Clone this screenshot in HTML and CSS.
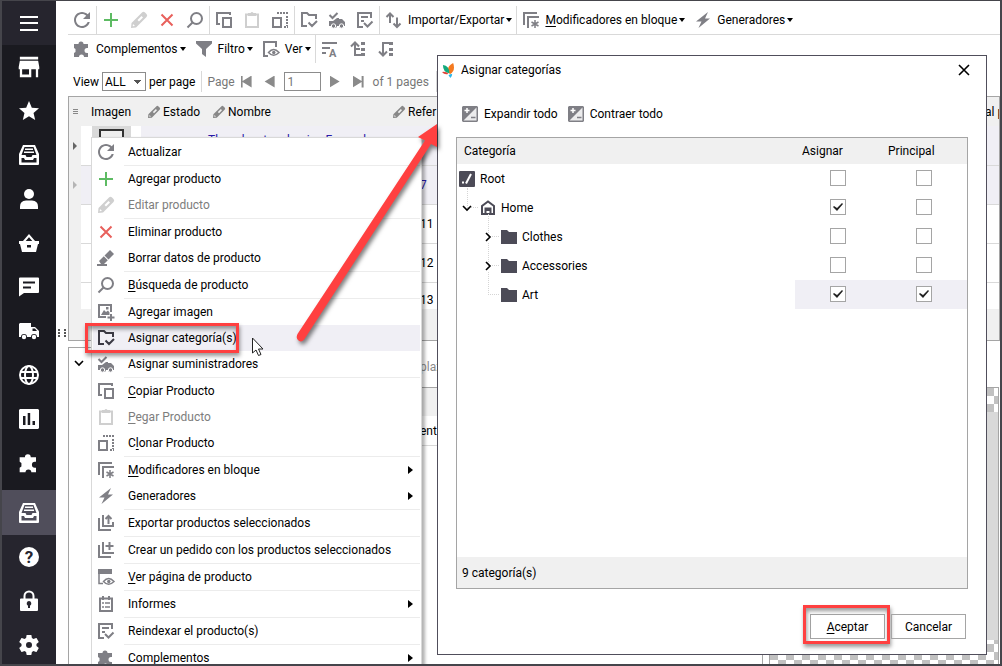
FILE: index.html
```html
<!DOCTYPE html>
<html lang="es">
<head>
<meta charset="utf-8">
<title>Asignar categorías</title>
<link rel="stylesheet" href="styles.css">
</head>
<body>
<svg class="defs" aria-hidden="true">
  <symbol id="i-refresh" viewBox="0 0 24 24"><path fill="currentColor" d="M17.65 6.35C16.2 4.9 14.21 4 12 4c-4.42 0-7.99 3.58-7.99 8s3.57 8 7.99 8c3.73 0 6.84-2.55 7.73-6h-2.08c-.82 2.33-3.04 4-5.65 4-3.31 0-6-2.69-6-6s2.69-6 6-6c1.66 0 3.14.69 4.22 1.78L13 11h7V4l-2.35 2.35z"/></symbol>
  <symbol id="i-plus" viewBox="0 0 24 24"><path class="s2" d="M12 5v14M5 12h14"/></symbol>
  <symbol id="i-x" viewBox="0 0 24 24"><path class="s2" d="M6.500 6.500l11 11M17.500 6.500l-11 11"/></symbol>
  <symbol id="i-pencil" viewBox="0 0 24 24"><path fill="currentColor" fill-rule="evenodd" d="M4 20l.5-5L15 4.500q1.500-1.500 3 0l1.500 1.500q1.500 1.500 0 3L9 19.500zM14.500 8l-4 4 1.500 1.500 4-4zM6 16l-.3 2.300L8 18z"/></symbol>
  <symbol id="i-search" viewBox="0 0 24 24"><circle class="s2" cx="13.500" cy="10.500" r="5.500"/><path class="s2" d="M9.500 14.500l-5 5"/></symbol>
  <symbol id="i-copy" viewBox="0 0 24 24"><path class="s2" d="M18 7V5H5v11h3"/><path class="s2" d="M11 10h8v9h-8z"/></symbol>
  <symbol id="i-paste" viewBox="0 0 24 24"><path class="s2" d="M6 6.500h12V19H6z"/><path fill="currentColor" d="M8 8V5h2.500q1.500-2 3 0H16v3z"/></symbol>
  <symbol id="i-clone" viewBox="0 0 24 24"><path class="s2" d="M5 10h8v9H5z"/><path class="s2 dash" d="M9 5h11M19 8v10M16 19h4"/></symbol>
  <symbol id="i-foldercheck" viewBox="0 0 24 24"><path class="s2" d="M10 18H5V5h5l2 2h7v4M11.500 14.500l3.500 3.500 5-5"/></symbol>
  <symbol id="i-truckcheck" viewBox="0 0 24 24"><path class="s2" d="M4.500 7l3 3 5-5"/><path fill="currentColor" d="M4 13h4l4-3h2v1h3l3 3v4h-2a2 2 0 0 1-4 0h-2a2 2 0 0 1-4 0H4z"/><circle cx="8.500" cy="18" r="2.200" fill="currentColor" stroke="#fff"/><circle cx="16.500" cy="18" r="2.200" fill="currentColor" stroke="#fff"/></symbol>
  <symbol id="i-doccheck" viewBox="0 0 24 24"><path class="s2" d="M10 19H5V5h13v5M8 9h7M8 13h3M11 15l3.500 3.500 5-5"/></symbol>
  <symbol id="i-updown" viewBox="0 0 24 24"><path class="s2" d="M8 15V5.500M4.500 9L8 5.500 11.500 9M15 9.500V19M11.500 15.500L15 19l3.500-3.500"/></symbol>
  <symbol id="i-bulk" viewBox="0 0 24 24"><path class="s2" d="M5 17V5h13M9 20V9h11"/><path class="s1" d="M16 12v8M12.500 14l7 4M19.500 14l-7 4"/></symbol>
  <symbol id="i-bolt" viewBox="0 0 24 24"><path fill="currentColor" d="M17 4L5 13.500h5.500L7.500 20 19 10.500h-5z"/></symbol>
  <symbol id="i-puzzle" viewBox="0 0 24 24"><path fill="currentColor" d="M4 7h4.500a2.500 2.500 0 1 1 5 0H18v4h-1a2 2 0 1 0 0 5h1v4h-4a2.500 2.500 0 1 0-5 0H4v-4l1.500-1v-3L4 11z"/></symbol>
  <symbol id="i-funnel" viewBox="0 0 24 24"><path fill="currentColor" d="M4 4h16v2.500L14 12v8l-4-3v-5L4 6.500z"/></symbol>
  <symbol id="i-view" viewBox="0 0 24 24"><path class="s2" d="M9 19H5V5h12v5"/><path class="s1" d="M9.500 15.500q5-6 10.500 0q-5.500 5.500-10.500 0z"/><circle cx="14.800" cy="15.500" r="1.700" fill="currentColor"/></symbol>
  <symbol id="i-page" viewBox="0 0 24 24"><path fill="currentColor" d="M4 4h14v5H4z"/><path class="s1" d="M9 18.500H5V8M9.500 16.500q5-6 10.500 0q-5.500 5.500-10.500 0z"/><circle cx="14.800" cy="16.500" r="1.700" fill="currentColor"/></symbol>
  <symbol id="i-treeup" viewBox="0 0 24 24"><path class="s2" d="M9 6v12h6M5 9.500L9 5.500l4 4M9 12h5"/><path fill="currentColor" d="M15 5h4v3h-4zM15 11h4v3h-4zM15 16h4v3h-4z"/></symbol>
  <symbol id="i-treedown" viewBox="0 0 24 24"><path class="s2" d="M15 6H9v12M5 14.500l4 4 4-4"/><path fill="currentColor" d="M15 5h4v3h-4zM15 11h4v3h-4zM15 16h4v3h-4z"/></symbol>
  <symbol id="i-eraser" viewBox="0 0 24 24"><path fill="currentColor" d="M16 4l4 4-5.500 5.500-4-4zM9.800 10.300l4 4L10 18H7l-2-3zM3 18h10v2H3z"/></symbol>
  <symbol id="i-image" viewBox="0 0 24 24"><path class="s2" d="M12 17H5V5h12v7M17 14v7M13.500 17.500h7"/><path fill="currentColor" d="M7 15l3-5 2 2 2-1.500 1.500 2v2.500zM12 7h2.500v2.500H12z"/></symbol>
  <symbol id="i-export" viewBox="0 0 24 24"><path class="s2" d="M5 7v12h12M9 4v11h10v-4M14.500 13V5M11.500 8l3-3 3 3"/></symbol>
  <symbol id="i-order" viewBox="0 0 24 24"><path class="s2" d="M5 7v12h12M9 4v11h11M15.500 4v8M11.500 8h8"/></symbol>
  <symbol id="i-report" viewBox="0 0 24 24"><path class="s2" d="M6 6.500h12V19H6zM9 4v4M15 4v4"/><path class="s1" d="M8 11h2M11 11h5M8 15h2M11 15h5"/></symbol>
  <symbol id="i-pm" viewBox="0 0 16 16"><path fill="currentColor" d="M1 0h14l1 1v14l-1 1H1l-1-1V1z"/><path d="M1.500 14.500L14.500 1.500V14.500z" fill="#fff" opacity=".85"/><path stroke="#fff" stroke-width="1.500" d="M2.500 4.500h5M5 2v5"/><path stroke="currentColor" stroke-width="1.500" d="M9 11.500h4.500"/></symbol>
  <symbol id="i-root" viewBox="0 0 16 16"><rect width="16" height="16" rx="1" fill="currentColor"/><path stroke="#fff" stroke-width="2" d="M12 3L7 12.500"/><path fill="#fff" d="M3 10.500h2v2H3z"/></symbol>
  <symbol id="i-home" viewBox="0 0 16 16"><path fill="none" stroke="currentColor" stroke-width="2" d="M2 14V6l6-4.500L14 6v8z"/><path fill="currentColor" d="M4.500 7.500h7V15h-2v-4h-3v4h-2z"/></symbol>
  <symbol id="i-folder" viewBox="0 0 16 16"><path fill="currentColor" d="M0 1h6l2 2h8v12H0z"/></symbol>
  <symbol id="i-down" viewBox="0 0 10 10"><path fill="none" stroke="#000" stroke-width="1.600" d="M1 3l4 4 4-4"/></symbol>
  <symbol id="i-right" viewBox="0 0 10 10"><path fill="none" stroke="#000" stroke-width="1.600" d="M3 1l4 4-4 4"/></symbol>

  <symbol id="n-menu" viewBox="0 0 24 24"><path class="s2" d="M3 6h18M3 12h18M3 19h18"/></symbol>
  <symbol id="n-store" viewBox="1.500 1.500 21 21"><path fill="currentColor" d="M20 3H4v2.500h16zM21 14v-2l-1-5.500H4L3 12v2h1v7h10v-7h4v7h2v-7zM12 18.500H6V14h6z"/></symbol>
  <symbol id="n-star" viewBox="0 0 24 24"><path fill="currentColor" d="M12 17.270L18.180 21l-1.640-7.030L22 9.240l-7.190-.61L12 2 9.190 8.630 2 9.240l5.460 4.730L5.820 21z"/></symbol>
  <symbol id="n-drawer" viewBox="0 0 24 24"><path fill="currentColor" fill-rule="evenodd" d="M6 2h12l4 9v10q0 1-1 1H3q-1 0-1-1V11zM7.500 4L4.500 12h4l1 2h5l1-2h4L16.500 4zM4.500 15v4.500h15V15H17l-1 2H8l-1-2z"/><path fill="currentColor" d="M8 5.500h8V7H8zM7 8.500h10V10H7z"/></symbol>
  <symbol id="n-user" viewBox="0 0 24 24"><circle cx="12" cy="7" r="5" fill="currentColor"/><path fill="currentColor" d="M3 22v-2.500Q3 14 9 13.500h6q6 .5 6 6V22z"/></symbol>
  <symbol id="n-basket" viewBox="0 0 24 24"><path class="s2" d="M6.500 11L12 4.500l5.500 6.500"/><path fill="currentColor" fill-rule="evenodd" d="M2 10h20v3h-1l-2 8H5l-2-8H2zM10 14v2.500h4V14z"/></symbol>
  <symbol id="n-chat" viewBox="0 0 24 24"><path fill="currentColor" fill-rule="evenodd" d="M3 2.500h18q1 0 1 1V17q0 1-1 1H7l-5 3.500v-18q0-1 1-1zM6 6.500v2h12v-2zM6 11.500v2h8v-2z"/></symbol>
  <symbol id="n-truck" viewBox="0 0 24 24"><path fill="currentColor" d="M3 4h11v4h4l4 4v6h-2a3 3 0 0 0-6 0h-4a3 3 0 0 0-6 0H2V5z"/><circle cx="7" cy="18" r="2.200" fill="currentColor"/><circle cx="17" cy="18" r="2.200" fill="currentColor"/><path d="M15.500 9.500H18l2 2.500h-4.500z" fill="#1a1a20"/></symbol>
  <symbol id="n-globe" viewBox="0 0 24 24"><g class="s2"><circle cx="12" cy="12" r="9"/><ellipse cx="12" cy="12" rx="4" ry="9"/><path d="M3.500 9h17M3.500 15h17"/></g></symbol>
  <symbol id="n-chart" viewBox="0 0 24 24"><path fill="currentColor" fill-rule="evenodd" d="M3 2h18l1 1v18l-1 1H3l-1-1V3zM6 9v9h2.500V9zM10.700 6v12h2.500V6zM15.500 14v4H18v-4z"/></symbol>
  <symbol id="n-lock" viewBox="0 0 24 24"><path class="s2" d="M7.500 10V7a4.500 4.500 0 0 1 9 0v3"/><path fill="currentColor" fill-rule="evenodd" d="M4 9.500h16q1 0 1 1V21q0 1-1 1H4q-1 0-1-1V10.500q0-1 1-1zM12 12a2.500 2.500 0 0 0-1 4.700V19h2v-2.300a2.500 2.500 0 0 0-1-4.700z"/></symbol>
  <symbol id="n-gear" viewBox="2 2 20 20"><path fill="currentColor" d="M19.430 12.980c.04-.32.07-.64.07-.98s-.03-.66-.07-.98l2.110-1.650c.19-.15.24-.42.12-.64l-2-3.460c-.12-.22-.39-.3-.61-.22l-2.490 1c-.52-.4-1.080-.73-1.690-.98l-.38-2.650C14.460 2.180 14.250 2 14 2h-4c-.25 0-.46.18-.49.42l-.38 2.650c-.61.25-1.170.59-1.690.98l-2.490-1c-.23-.09-.49 0-.61.22l-2 3.460c-.13.22-.07.49.12.64l2.110 1.650c-.04.32-.07.65-.07.98s.03.66.07.98l-2.110 1.650c-.19.15-.24.42-.12.64l2 3.460c.12.22.39.3.61.22l2.490-1c.52.4 1.080.73 1.690.98l.38 2.650c.03.24.24.42.49.42h4c.25 0 .46-.18.49-.42l.38-2.650c.61-.25 1.170-.59 1.690-.98l2.490 1c.23.09.49 0 .61-.22l2-3.460c.12-.22.07-.49-.12-.64l-2.110-1.650zM12 15a3 3 0 1 1 0-6 3 3 0 0 1 0 6z"/></symbol>
</svg>

<div class="app">
  <nav class="nav">
    <button class="nav-item nav-top" aria-label="Menu"><svg><use href="#n-menu"/></svg></button>
    <button class="nav-item" aria-label="Store"><svg><use href="#n-store"/></svg></button>
    <button class="nav-item" aria-label="Star"><svg><use href="#n-star"/></svg></button>
    <button class="nav-item" aria-label="Orders"><svg><use href="#n-drawer"/></svg></button>
    <button class="nav-item" aria-label="Customers"><svg><use href="#n-user"/></svg></button>
    <button class="nav-item" aria-label="Basket"><svg><use href="#n-basket"/></svg></button>
    <button class="nav-item" aria-label="Messages"><svg><use href="#n-chat"/></svg></button>
    <button class="nav-item" aria-label="Shipping"><svg><use href="#n-truck"/></svg></button>
    <button class="nav-item" aria-label="World"><svg><use href="#n-globe"/></svg></button>
    <button class="nav-item" aria-label="Reports"><svg><use href="#n-chart"/></svg></button>
    <button class="nav-item" aria-label="Addons"><svg class="big"><use href="#i-puzzle"/></svg></button>
    <div class="nav-bottom">
      <button class="nav-item nav-active" aria-label="Drawer"><svg><use href="#n-drawer"/></svg></button>
      <button class="nav-item" aria-label="Help"><span class="help">?</span></button>
      <button class="nav-item" aria-label="Lock"><svg><use href="#n-lock"/></svg></button>
      <button class="nav-item" aria-label="Settings"><svg class="small"><use href="#n-gear"/></svg></button>
    </div>
  </nav>
  <div class="gutter"><span class="grip"></span></div>

  <main class="main">
    <div class="toolbar toolbar-first">
      <div class="group"><button class="tool" aria-label="Refresh"><svg class="ic"><use href="#i-refresh"/></svg></button></div>
      <div class="group">
        <button class="tool green" aria-label="Add"><svg class="ic"><use href="#i-plus"/></svg></button>
        <button class="tool off" aria-label="Edit"><svg class="ic"><use href="#i-pencil"/></svg></button>
        <button class="tool red" aria-label="Delete"><svg class="ic"><use href="#i-x"/></svg></button>
        <button class="tool" aria-label="Search"><svg class="ic"><use href="#i-search"/></svg></button>
      </div>
      <div class="group">
        <button class="tool" aria-label="Copy"><svg class="ic"><use href="#i-copy"/></svg></button>
        <button class="tool off" aria-label="Paste"><svg class="ic"><use href="#i-paste"/></svg></button>
        <button class="tool" aria-label="Clone"><svg class="ic"><use href="#i-clone"/></svg></button>
      </div>
      <div class="group">
        <button class="tool" aria-label="Categories"><svg class="ic"><use href="#i-foldercheck"/></svg></button>
        <button class="tool" aria-label="Suppliers"><svg class="ic"><use href="#i-truckcheck"/></svg></button>
        <button class="tool" aria-label="Reindex"><svg class="ic"><use href="#i-doccheck"/></svg></button>
      </div>
      <div class="group"><button class="tool"><svg class="ic"><use href="#i-updown"/></svg>Importar/Exportar<i class="caret"></i></button></div>
      <div class="group">
        <button class="tool"><svg class="ic"><use href="#i-bulk"/></svg><span><u>M</u>odificadores en bloque</span><i class="caret"></i></button>
        <button class="tool"><svg class="ic"><use href="#i-bolt"/></svg>Generadores<i class="caret"></i></button>
      </div>
    </div>
    <div class="toolbar">
      <div class="group">
        <button class="tool"><svg class="ic"><use href="#i-puzzle"/></svg>Complementos<i class="caret"></i></button>
        <button class="tool"><svg class="ic"><use href="#i-funnel"/></svg>Filtro<i class="caret"></i></button>
        <button class="tool"><svg class="ic"><use href="#i-view"/></svg>Ver<i class="caret"></i></button>
      </div>
      <div class="group">
        <button class="tool" aria-label="Sort"><svg class="ic" viewBox="0 0 24 24"><path class="s2" d="M4 6h15M4 11h8M4 16h4"/><text x="11" y="20" font-size="11" font-weight="700" fill="currentColor">A</text></svg></button>
        <button class="tool" aria-label="Up"><svg class="ic"><use href="#i-treeup"/></svg></button>
        <button class="tool" aria-label="Down"><svg class="ic"><use href="#i-treedown"/></svg></button>
      </div>
    </div>
    <div class="pager">
      <label for="size">View</label>
      <select id="size" class="size"><option>ALL</option></select>
      <span>per page</span>
      <div class="pages">
        <label for="page">Page</label>
        <button class="step first" aria-label="First"></button>
        <button class="step prev" aria-label="Previous"></button>
        <input id="page" class="page" type="text" value="1">
        <button class="step next" aria-label="Next"></button>
        <button class="step last" aria-label="Last"></button>
        <span>of 1 pages</span>
      </div>
    </div>

    <div class="grid">
      <table class="products">
        <colgroup><col class="c-mark"><col class="c-img"><col class="c-state"><col class="c-name"><col class="c-ref"><col><col class="c-last"></colgroup>
        <thead><tr>
          <th class="mark"><span class="bars"></span></th>
          <th class="img-h">Imagen</th>
          <th><span class="edit"><svg><use href="#i-pencil"/></svg>Estado</span></th>
          <th><span class="edit"><svg><use href="#i-pencil"/></svg>Nombre</span></th>
          <th><span class="edit"><svg><use href="#i-pencil"/></svg>Refer</span></th>
          <th></th><th>al p</th>
        </tr></thead>
        <tbody>
          <tr class="sel"><td class="mark"><i class="tri"></i></td><td class="img"><div class="thumb"><div class="frame"></div></div></td><td></td><td class="name">The adventure begins Framed</td><td></td><td></td><td></td></tr>
          <tr class="sel"><td class="mark"><i class="tri pale"></i></td><td></td><td></td><td></td><td class="ref blue">7</td><td></td><td></td></tr>
          <tr><td class="mark"></td><td></td><td></td><td></td><td class="ref">11</td><td></td><td></td></tr>
          <tr><td class="mark"></td><td></td><td></td><td></td><td class="ref">12</td><td></td><td></td></tr>
          <tr class="short"><td class="mark"></td><td></td><td></td><td></td><td class="ref">13</td><td></td><td></td></tr>
        </tbody>
      </table>
    </div>

    <div class="lower">
      <div class="side"><svg class="chev"><use href="#i-down"/></svg></div>
      <div class="detail">
        <div class="detail-bar">plaz</div>
        <div class="detail-head"></div>
        <div class="detail-row">entu</div>
      </div>
      <div class="preview"><div class="checker"><div class="picture"></div></div></div>
    </div>
  </main>

  <div class="menu" role="menu">
    <button class="mi"><svg class="ic"><use href="#i-refresh"/></svg><span>Actualizar</span></button>
    <hr>
    <button class="mi green"><svg class="ic"><use href="#i-plus"/></svg><span>Agregar producto</span></button>
    <button class="mi disabled"><svg class="ic"><use href="#i-pencil"/></svg><span>Editar producto</span></button>
    <hr>
    <button class="mi red"><svg class="ic"><use href="#i-x"/></svg><span>Eliminar producto</span></button>
    <button class="mi"><svg class="ic"><use href="#i-eraser"/></svg><span>Borrar datos de producto</span></button>
    <hr>
    <button class="mi"><svg class="ic"><use href="#i-search"/></svg><span><u>B</u>úsqueda de producto</span></button>
    <hr>
    <button class="mi"><svg class="ic"><use href="#i-image"/></svg><span>Agregar imagen</span></button>
    <button class="mi hot"><svg class="ic"><use href="#i-foldercheck"/></svg><span>Asignar categoría(s)</span></button>
    <button class="mi"><svg class="ic"><use href="#i-truckcheck"/></svg><span>Asignar suministradores</span></button>
    <hr>
    <button class="mi"><svg class="ic"><use href="#i-copy"/></svg><span><u>C</u>opiar Producto</span></button>
    <button class="mi disabled"><svg class="ic"><use href="#i-paste"/></svg><span><u>P</u>egar Producto</span></button>
    <button class="mi"><svg class="ic"><use href="#i-clone"/></svg><span>C<u>l</u>onar Producto</span></button>
    <hr>
    <button class="mi more"><svg class="ic"><use href="#i-bulk"/></svg><span><u>M</u>odificadores en bloque</span></button>
    <button class="mi more"><svg class="ic"><use href="#i-bolt"/></svg><span>Generadores</span></button>
    <hr>
    <button class="mi"><svg class="ic"><use href="#i-export"/></svg><span>Exportar productos seleccionados</span></button>
    <hr>
    <button class="mi"><svg class="ic"><use href="#i-order"/></svg><span>Crear un pedido con los productos seleccionados</span></button>
    <hr>
    <button class="mi"><svg class="ic"><use href="#i-page"/></svg><span><u>V</u>er página de producto</span></button>
    <hr>
    <button class="mi more"><svg class="ic"><use href="#i-report"/></svg><span>Informes</span></button>
    <hr>
    <button class="mi"><svg class="ic"><use href="#i-doccheck"/></svg><span>Reindexar el producto(s)</span></button>
    <hr>
    <button class="mi more"><svg class="ic"><use href="#i-puzzle"/></svg><span>Complementos</span></button>
  </div>

  <section class="dialog" role="dialog" aria-labelledby="dlg-title">
    <header class="dlg-head">
      <svg class="logo" viewBox="0 0 14 16"><path fill="#f47a20" d="M12 0q3 8-3.500 12Q3 5 12 0z"/><path fill="#12a97c" d="M1 2q7 1 7 9Q1 10 1 2z"/><path fill="#e0453a" d="M0 9.500q4-1 7 2-4 2-7-2z"/><path fill="#29b6e8" d="M7 13q3-2 4-1 0 2-2 4z"/></svg>
      <h1 id="dlg-title">Asignar categorías</h1>
      <button class="close" aria-label="Close"><svg viewBox="0 0 12 12"><path fill="none" stroke="#000" stroke-width="1.600" d="M1 1l10 10M11 1L1 11"/></svg></button>
    </header>
    <div class="dlg-tools">
      <button><svg><use href="#i-pm"/></svg>Expandir todo</button>
      <button><svg><use href="#i-pm"/></svg>Contraer todo</button>
    </div>
    <div class="tree-box">
      <table class="tree">
        <colgroup><col><col class="c-check"><col class="c-check"></colgroup>
        <thead><tr><th>Categoría</th><th>Asignar</th><th>Principal</th></tr></thead>
        <tbody>
          <tr><td><span class="node"><svg><use href="#i-root"/></svg>Root</span></td><td class="ck"><input type="checkbox" aria-label="Asignar Root"></td><td class="ck"><input type="checkbox" aria-label="Principal Root"></td></tr>
          <tr><td><span class="node l1"><i class="guide"></i><svg class="exp"><use href="#i-down"/></svg><svg><use href="#i-home"/></svg>Home</span></td><td class="ck"><input type="checkbox" aria-label="Asignar Home" checked></td><td class="ck"><input type="checkbox" aria-label="Principal Home"></td></tr>
          <tr><td><span class="node l2"><i class="guide"></i><svg class="exp"><use href="#i-right"/></svg><svg><use href="#i-folder"/></svg>Clothes</span></td><td class="ck"><input type="checkbox" aria-label="Asignar Clothes"></td><td class="ck"><input type="checkbox" aria-label="Principal Clothes"></td></tr>
          <tr><td><span class="node l2"><i class="guide"></i><svg class="exp"><use href="#i-right"/></svg><svg><use href="#i-folder"/></svg>Accessories</span></td><td class="ck"><input type="checkbox" aria-label="Asignar Accessories"></td><td class="ck"><input type="checkbox" aria-label="Principal Accessories"></td></tr>
          <tr class="picked"><td><span class="node l2"><i class="guide"></i><i class="exp"></i><svg><use href="#i-folder"/></svg>Art</span></td><td class="ck"><input type="checkbox" aria-label="Asignar Art" checked></td><td class="ck"><input type="checkbox" aria-label="Principal Art" checked></td></tr>
        </tbody>
      </table>
      <div class="count">9 categoría(s)</div>
    </div>
    <footer class="dlg-foot">
      <button class="btn ok"><span><u>A</u>ceptar</span></button>
      <button class="btn">Cancelar</button>
    </footer>
  </section>

  <div class="mark-box"></div>
  <svg class="arrow" viewBox="0 0 160 240"><path fill="#ff4040" d="M7.500 219L135 25.500l-7-3.500L147 9v23l-6-3L14.500 224q-2.500 4-6 1.500-3-2-1-6.500z"/></svg>
  <svg class="cursor" viewBox="0 0 14 20"><path fill="#fff" stroke="#222" d="M1.500 1v15l3.500-3 2.500 5.500 2.500-1L7.500 12h4.500z"/></svg>
</div>
</body>
</html>
```
FILE: styles.css
```css
* { box-sizing: border-box; }
body, h1 { margin: 0; }
body { font: 12px/16px Roboto, "Open Sans", sans-serif; color: #000; background: #fff; }
button { font: inherit; color: inherit; background: none; border: 0; padding: 0; display: flex; align-items: center; }
th { font-weight: 400; text-align: left; }
th, td { padding: 0; }
table { border-collapse: collapse; table-layout: fixed; width: 100%; }
u { text-underline-offset: 2px; }
.defs { position: absolute; width: 0; height: 0; }
.s1, .s2 { fill: none; stroke: currentColor; stroke-width: 2; }
.s1 { stroke-width: 1.5; }
.dash { stroke-dasharray: 2 1; }

.app { position: relative; display: flex; height: 100vh; overflow: hidden; border: solid #45454b; border-width: 1px 2px; }
.app::after { content: ""; position: absolute; left: 0; right: 0; bottom: 0; height: 1px; background: #45454b; z-index: 5; }

/* Navigation rail */
.nav { flex: none; width: 54px; display: flex; flex-direction: column; background: #1a1a20; color: #fff; }
.nav-item { flex: none; width: 100%; height: 44px; justify-content: center; }
.nav-item svg { width: 24px; height: 24px; }
.nav-item .small { width: 20px; height: 20px; }
.nav-item .big { width: 28px; height: 28px; }
.nav-top { background: #26252e; }
.nav-bottom { margin-top: 5px; flex: 1 0 auto; background: #26252e; }
.nav-active { height: 45px; background: #504e5b; }
.help { width: 20px; border-radius: 50%; background: #fff; color: #26252e; font-size: 17px; line-height: 20px; font-weight: 700; text-align: center; }
.gutter { flex: none; width: 12px; display: flex; align-items: center; padding-left: 2px; }
.grip { width: 8px; height: 8px; background: linear-gradient(90deg, #fff0 2px, #fff 2px 6px, #fff0 6px), repeating-linear-gradient(#555 0 2px, #fff 2px 3px); }
.main { flex: 1; min-width: 0; display: flex; flex-direction: column; }

/* Toolbars */
.toolbar { flex: none; display: flex; height: 28px; white-space: nowrap; }
.toolbar-first { height: 34px; padding-top: 5px; border-bottom: 1px solid #d9d9d9; }
.group { display: flex; }
.group + .group { border-left: 1px solid #d9d9d9; }
.tool { min-width: 28px; color: #000; }
.ic { flex: none; width: 24px; height: 24px; margin: 0 2px; color: #7f7f85; }
.green .ic { color: #5dbb63; }
.red .ic { color: #e8605c; }
.off .ic, .disabled .ic { color: #cfcfcf; }
.caret { margin: 0 4px 0 2px; border: solid transparent; border-width: 4px 3px 0; border-top-color: #000; }
.pager { flex: none; display: flex; align-items: center; height: 33px; padding: 4px 0 0 5px; gap: 3px; white-space: nowrap; }
.size { appearance: none; width: 44px; height: 19px; padding: 0 2px; border: 1px solid #8c8c8c; border-radius: 0; font: inherit; color: #000; background: conic-gradient(from 315deg at 50% 100%, #555 90deg, #fff0 0) 31px 7px / 7px 4px no-repeat #fff; }
.pages { display: flex; align-items: center; height: 21px; margin-left: 3px; padding: 0 7px 0 5px; border: solid #d9d9d9; border-width: 0 1px; color: #777; }
.step { width: 11px; height: 12px; background: #8a8a8a; clip-path: polygon(100% 0, 100% 100%, 1px 50%); }
.first { margin-left: 6px; clip-path: polygon(0 0, 2px 0, 2px 45%, 100% 0, 100% 100%, 2px 55%, 2px 100%, 0 100%); }
.prev { margin: 0 9px 0 12px; }
.next { margin: 0 12px 0 9px; clip-path: polygon(0 0, 0 100%, 10px 50%); }
.last { margin-right: 9px; clip-path: polygon(0 0, 9px 45%, 9px 0, 100% 0, 100% 100%, 9px 100%, 9px 55%, 0 100%); }
.page { width: 37px; height: 19px; padding: 0 3px; border: 1px solid #8c8c8c; font: inherit; color: #777; }

/* Product grid */
.grid { flex: none; height: 245px; border: 1px solid #a5a5a5; background: #f0f0f0; overflow: hidden; }
.c-mark { width: 12px; }
.c-img { width: 60px; }
.c-state { width: 65px; }
.c-name { width: 180px; }
.c-ref { width: 100px; }
.c-last { width: 14px; }
.products th { height: 29px; overflow: hidden; white-space: nowrap; }
.products .mark { background: #f0f0f0; border: 0; }
.products td { height: 39px; background: #fff; border-bottom: 1px solid #d9d9d9; white-space: nowrap; }
.products .sel td { background: #f0eff5; }
.products .sel .mark { background: #f0f0f0; }
.products .sel .img { background: #fff; padding-left: 11px; vertical-align: top; }
.products .short td { height: 27px; border: 0; padding-top: 8px; }
.products .img-h { padding-left: 10px; }
.bars { display: block; width: 5px; height: 6px; margin-left: 4px; background: repeating-linear-gradient(#888 0 1px, #fff0 1px 2px); }
.edit { display: flex; align-items: center; padding-left: 4px; color: #000; }
.edit svg { flex: none; width: 18px; height: 18px; color: #888; }
.tri { display: block; margin-left: 4px; border: solid transparent; border-width: 4px 0 4px 4px; border-left-color: #666; }
.pale { border-left-color: #b5b5b5; }
.thumb { height: 37px; width: 39px; padding: 3px 7px; background: #d9d9d9; }
.frame { height: 30px; border: 2px solid #333; background: #eee; }
.products .name { padding-left: 2px; vertical-align: top; padding-top: 6px; color: #2a1aa8; }
.products .ref { padding-left: 34px; }
.products .blue { color: #2a1aa8; }

/* Lower panels */
.lower { flex: 1; min-height: 0; margin-top: 6px; display: grid; grid-template-columns: 236px 1fr 230px; padding-right: 1px; }
.side { border: solid #a5a5a5; border-width: 1px 0 0 1px; padding: 10px 5px; }
.chev { width: 10px; height: 10px; display: block; }
.detail { border-right: 1px solid #a5a5a5; margin-right: 6px; }
.detail-bar { height: 41px; padding: 12px 0 0 116px; color: #8a8a8a; border-bottom: 1px solid #a5a5a5; }
.detail-head { height: 28px; background: #f0f0f0; }
.detail-row { height: 30px; padding: 7px 0 0 116px; border-bottom: 1px solid #d9d9d9; }
.preview { padding-top: 40px; }
.checker { height: 100%; padding: 24px 0 25px; border: 1px solid #a5a5a5; border-bottom: 0; background: repeating-conic-gradient(#c1c1c1 0 25%, #fff 0 50%) 0 0 / 16px 16px; }
.picture { height: 100%; background: #d9d9d9; }

/* Context menu */
.menu { position: absolute; left: 89px; top: 136px; width: 331px; padding: 1px; border: 1px solid #d9d9d9; background: #fff; box-shadow: 3px 2px 3px rgba(0, 0, 0, .3); }
.mi { width: 100%; height: 26px; white-space: nowrap; }
.mi .ic { margin-left: 1px; }
.mi span { padding-left: 8px; }
.menu hr { height: 1px; margin: 0 0 0 31px; border: 0; background: #ececec; }
.hot { background: #f0eff5; }
.hot .ic { color: #3b3a44; }
.disabled { color: #7d7d7d; }
.more::after { content: ""; margin: 0 7px 0 auto; border: solid transparent; border-width: 4px 0 4px 5px; border-left-color: #000; }

/* Dialog */
.dialog { position: absolute; left: 435px; right: 13px; top: 54px; bottom: 10px; display: flex; flex-direction: column; border: 1px solid #504e5b; background: #fff; padding: 0 18px; }
.dlg-head { display: flex; align-items: center; height: 28px; margin-left: -14px; }
.logo { width: 13px; height: 15px; }
h1 { font-size: 12px; font-weight: 400; margin-left: 6px; }
.close { margin: 0 -2px 0 auto; }
.close svg { width: 12px; height: 12px; }
.dlg-tools { display: flex; gap: 10px; height: 53px; padding: 7px 6px 0; }
.dlg-tools button { gap: 6px; }
.dlg-tools svg { width: 16px; height: 16px; color: #7f7f85; }
.tree-box { flex: 1; min-height: 0; display: flex; flex-direction: column; border: 1px solid #a5a5a5; }
.tree th { height: 26px; background: #f0f0f0; padding-left: 7px; }
.tree td { height: 29px; }
.c-check { width: 86px; }
.tree .ck { vertical-align: top; padding-top: 6px; }
.picked .ck { background: #f0eff5; }
.tree input { appearance: none; display: block; width: 16px; height: 16px; margin: 0 auto; border: 1px solid #a5a5a5; background: #fff; overflow: hidden; }
.tree input:checked::after { content: ""; display: block; width: 14px; height: 14px; background: #222; clip-path: polygon(2px 7px, 3px 6px, 6px 8px, 11px 3px, 12px 4px, 6px 11px); }
.node { position: relative; display: flex; align-items: center; height: 29px; padding-left: 2px; gap: 5px; }
.node svg { width: 16px; height: 16px; color: #4c4b57; }
.node .exp { width: 10px; height: 10px; margin-right: 3px; }
.node .guide { position: absolute; left: 10px; top: -5px; width: 11px; height: 20px; border: 1px dotted #d5d5d5; border-width: 0 0 1px 1px; }
.l1 { padding-left: 5px; }
.l2 { padding-left: 26px; }
.l2 .guide { left: 31px; top: -8px; height: 23px; }
.guide + .exp { position: relative; }
.count { margin-top: auto; height: 31px; padding: 8px 5px; background: #f0f0f0; }
.dlg-foot { display: flex; justify-content: flex-end; gap: 6px; height: 65px; padding: 25px 2px 0 0; }
.btn { position: relative; width: 75px; height: 25px; justify-content: center; border: 1px solid #a5a5a5; }
.ok::after { content: ""; position: absolute; inset: -10px -6px -6px -8px; border: 3px solid #ff4040; box-shadow: 1px 3px 4px rgba(0, 0, 0, .4), inset 1px 3px 4px rgba(0, 0, 0, .4); }

/* Annotations */
.mark-box { position: absolute; left: 83px; top: 322px; width: 154px; height: 30px; border: 3px solid #ff4040; box-shadow: 1px 3px 4px rgba(0, 0, 0, .4), inset 1px 3px 4px rgba(0, 0, 0, .4); }
.arrow { position: absolute; left: 288px; top: 114px; width: 160px; height: 240px; filter: drop-shadow(2px 3px 2px rgba(0, 0, 0, .5)); }
.cursor { position: absolute; left: 249px; top: 336px; width: 14px; height: 20px; }
```
